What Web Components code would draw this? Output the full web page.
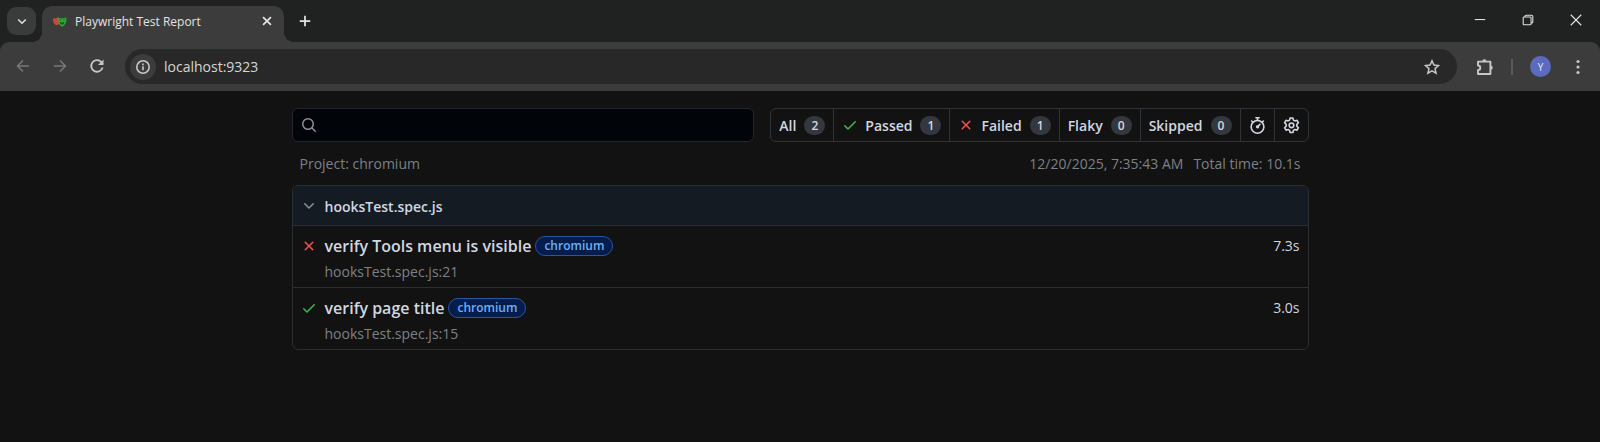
<!DOCTYPE html>
<html lang="en">
<head>
<meta charset="utf-8">
<title>Playwright Test Report</title>
<style>
  body {
    margin: 0;
    min-height: 100vh;
    background: #121212;
    color: #d1d7e0;
    font-family: "Open Sans", "Noto Sans", sans-serif;
    font-size: 14px;
  }
</style>
</head>
<body>
<browser-tabs><span slot="title">Playwright Test Report</span></browser-tabs>
<browser-toolbar url="localhost:9323"></browser-toolbar>
<test-report></test-report>

<script>
const ICONS = {
  down: '<path d="M3 6l5 5 5-5" fill="none" stroke="currentColor" stroke-width="2"/>',
  chevron: '<path fill="currentColor" d="M12.78 5.22a.75.75 0 0 1 0 1.06l-4.25 4.25a.75.75 0 0 1-1.06 0L3.22 6.28a.75.75 0 0 1 1.06-1.06L8 8.94l3.72-3.72a.75.75 0 0 1 1.06 0Z"/>',
  close: '<path d="M3.500 3.500l9 9m0-9l-9 9" fill="none" stroke="currentColor" stroke-width="2"/>',
  plus: '<path d="M8 2v12M2 8h12" fill="none" stroke="currentColor" stroke-width="2"/>',
  minimize: '<path d="M2 7.500h12" fill="none" stroke="currentColor" stroke-width="1.200"/>',
  restore: '<path d="M2.500 5.500a1 1 0 0 1 1-1h7a1 1 0 0 1 1 1v7a1 1 0 0 1-1 1h-7a1 1 0 0 1-1-1zM4.500 4.500v-.5a1.500 1.500 0 0 1 1.500-1.500h6a1.500 1.500 0 0 1 1.500 1.500v6a1.500 1.500 0 0 1-1.500 1.500h-.5" fill="none" stroke="currentColor" stroke-width="1.200"/>',
  exit: '<path d="M2 2l12 12m0-12l-12 12" fill="none" stroke="currentColor" stroke-width="1.300"/>',
  back: '<path d="M14 8H3M8 2.500L2.500 8 8 13.500" fill="none" stroke="currentColor" stroke-width="1.600"/>',
  forward: '<path d="M2 8h11M8 2.500L13.500 8 8 13.500" fill="none" stroke="currentColor" stroke-width="1.600"/>',
  reload: '<path d="M13.600 9.500A5.800 5.800 0 1 1 12.300 4l1.200 1.400" fill="none" stroke="currentColor" stroke-width="1.800"/><path d="M14.500 1.500v5.500H9z" fill="currentColor"/>',
  info: '<circle cx="8" cy="8" r="6.200" fill="none" stroke="currentColor" stroke-width="1.600"/><path d="M7.200 7.200h1.600v4H7.200zM7.200 4.600h1.600v1.600H7.200z" fill="currentColor"/>',
  star: '<path d="M8 1.800l1.900 4.300 4.600.4-3.500 3.100 1.100 4.600L8 11.800l-4.100 2.400L5 9.600 1.500 6.500l4.600-.4z" fill="none" stroke="currentColor" stroke-width="1.500"/>',
  puzzle: '<path d="M1.800 3.200h11v11h-11v-3.600a2 2 0 0 0 0-4z" fill="none" stroke="currentColor" stroke-width="1.700" stroke-linejoin="round"/><path d="M5.500 3a1.900 1.900 0 0 1 3.800 0zM13 6.800a1.900 1.900 0 0 1 0 3.800z" fill="currentColor"/>',
  dots: '<circle cx="8" cy="2.500" r="1.600" fill="currentColor"/><circle cx="8" cy="8" r="1.600" fill="currentColor"/><circle cx="8" cy="13.500" r="1.600" fill="currentColor"/>',
  masks: '<path d="M1 4.500q3 .8 6-1.500l1 7q-2 2.500-4 1.800Q1 10.500 1 4.500z" fill="#c9483b"/><path d="M6.500 4q4 1.600 8.800-.6Q16 11 11 13.500 6.500 12.500 6.500 4z" fill="#2ead33"/><path d="M8 6.500q1-.8 2 .2M12 6.500q1-1 2-.3M8.500 9q2.500 1.200 4.500-.4-.8 2.600-2.300 2.500T8.500 9z" fill="#14511a" stroke="#14511a" stroke-width=".6"/>',
  search: '<path fill="currentColor" d="M10.680 11.740a6 6 0 0 1-7.922-8.982 6 6 0 0 1 8.982 7.922l3.040 3.040a.749.749 0 1 1-1.060 1.060l-3.040-3.040ZM11.500 7a4.499 4.499 0 1 0-8.997 0A4.499 4.499 0 0 0 11.500 7Z"/>',
  check: '<path fill="currentColor" d="M13.780 4.220a.75.75 0 0 1 0 1.060l-7.250 7.250a.75.75 0 0 1-1.060 0L2.220 9.280a.751.751 0 0 1 1.060-1.060L6 10.940l6.720-6.720a.75.75 0 0 1 1.060 0Z"/>',
  cross: '<path fill="currentColor" d="M3.720 3.720a.75.75 0 0 1 1.060 0L8 6.940l3.220-3.220a.75.75 0 1 1 1.060 1.060L9.060 8l3.220 3.220a.75.75 0 1 1-1.060 1.060L8 9.060l-3.220 3.220a.75.75 0 0 1-1.060-1.060L6.940 8 3.720 4.780a.75.75 0 0 1 0-1.060Z"/>',
  stopwatch: '<path fill="currentColor" d="M5.750.75A.75.75 0 0 1 6.500 0h3a.75.75 0 0 1 0 1.500h-.75v1l-.001.041a6.724 6.724 0 0 1 3.464 1.435l.007-.006.75-.75a.749.749 0 1 1 1.060 1.060l-.75.75-.006.007a6.750 6.750 0 1 1-10.548 0L2.720 5.030l-.75-.75a.751.751 0 0 1 1.060-1.060l.75.75.007.006A6.720 6.720 0 0 1 7.250 2.541V1.500H6.500a.75.75 0 0 1-.75-.75ZM8 14.500a5.250 5.250 0 1 0 0-10.500 5.250 5.250 0 0 0 0 10.500Zm.389-6.700 1.330-1.330a.75.75 0 1 1 1.061 1.060L9.450 8.861A1.503 1.503 0 0 1 8 10.750a1.499 1.499 0 1 1 .389-2.950Z"/>',
  gear: '<path fill="none" stroke="currentColor" stroke-width="1.500" stroke-linejoin="round" d="M6.700.9h2.600l.5 2 1.400.8 2-.6 1.300 2.300-1.500 1.500v1.700l1.500 1.500-1.300 2.300-2-.6-1.400.8-.5 2H6.700l-.5-2-1.400-.8-2 .6-1.300-2.300L3 8.600V6.900L1.500 5.400l1.300-2.300 2 .6 1.400-.8z"/><circle cx="8" cy="7.800" r="2.200" fill="none" stroke="currentColor" stroke-width="1.500"/>'
};

class UiIcon extends HTMLElement {
  constructor() {
    super();
    this.attachShadow({ mode: 'open' });
  }

  connectedCallback() {
    this.shadowRoot.innerHTML = `
      <style>
        :host { display: inline-flex; flex: none; width: 16px; height: 16px; }
        svg { width: 100%; height: 100%; }
      </style>
      <svg viewBox="0 0 16 16" aria-hidden="true">${ICONS[this.getAttribute('name')]}</svg>
    `;
  }
}

class BrowserTabs extends HTMLElement {
  constructor() {
    super();
    this.attachShadow({ mode: 'open' });
  }

  connectedCallback() {
    this.shadowRoot.innerHTML = `
      <style>
        :host {
          display: flex;
          align-items: flex-start;
          height: 42px;
          background: #1f2221;
          color: #e3e3e3;
          font-size: 12px;
        }
        button {
          display: grid;
          place-items: center;
          padding: 0;
          border: 0;
          background: none;
          color: inherit;
        }
        ui-icon { width: 14px; height: 14px; }
        .list {
          width: 29px;
          height: 28px;
          margin: 7px 6px 0 7px;
          border-radius: 9px;
          background: #3a3c3b;
        }
        .list ui-icon { width: 12px; height: 12px; }
        .tab {
          position: relative;
          display: flex;
          align-items: center;
          gap: 8px;
          box-sizing: border-box;
          width: 242px;
          height: 36px;
          margin-top: 6px;
          padding: 0 10px;
          border-radius: 10px 10px 0 0;
          background: #3c3c3c;
        }
        /* flared feet of the active tab */
        .tab::before, .tab::after {
          content: "";
          position: absolute;
          bottom: 0;
          width: 10px;
          height: 10px;
        }
        .tab::before { right: 100%; background: radial-gradient(circle at 0 0, transparent 10px, #3c3c3c 10px); }
        .tab::after { left: 100%; background: radial-gradient(circle at 100% 0, transparent 10px, #3c3c3c 10px); }
        .name { flex: 1; padding-bottom: 6px; white-space: nowrap; }
        .tab > ui-icon, .tab button { margin-bottom: 6px; }
        .fav { width: 15px; height: 15px; }
        .new { width: 28px; height: 28px; margin: 7px 0 0 7px; }
        .window { display: flex; margin: 6px 0 0 auto; }
        .window button { width: 48px; height: 28px; }
      </style>
      <button class="list" aria-label="Search tabs"><ui-icon name="down"></ui-icon></button>
      <div class="tab">
        <ui-icon class="fav" name="masks"></ui-icon>
        <span class="name"><slot name="title"></slot></span>
        <button aria-label="Close tab"><ui-icon name="close"></ui-icon></button>
      </div>
      <button class="new" aria-label="New tab"><ui-icon name="plus"></ui-icon></button>
      <div class="window">
        <button aria-label="Minimize"><ui-icon name="minimize"></ui-icon></button>
        <button aria-label="Restore"><ui-icon name="restore"></ui-icon></button>
        <button aria-label="Close"><ui-icon name="exit"></ui-icon></button>
      </div>
    `;
  }
}

class BrowserToolbar extends HTMLElement {
  constructor() {
    super();
    this.attachShadow({ mode: 'open' });
  }

  connectedCallback() {
    this.shadowRoot.innerHTML = `
      <style>
        :host { display: block; background: #1f2221; color: #c7c7c7; }
        .bar {
          display: flex;
          align-items: center;
          height: 49px;
          padding: 0 9px 0 8px;
          border-radius: 9px 9px 0 0;
          background: #3c3c3c;
        }
        button {
          display: grid;
          place-items: center;
          flex: none;
          width: 30px;
          height: 30px;
          padding: 0;
          border: 0;
          background: none;
          color: inherit;
        }
        .nav { display: flex; gap: 7px; padding-bottom: 2px; }
        .nav button:disabled { color: #777; }
        .address {
          flex: 1;
          display: flex;
          align-items: center;
          gap: 8px;
          height: 35px;
          margin: 0 13px;
          padding: 0 10px 0 5px;
          border-radius: 18px;
          background: #282828;
        }
        .info { width: 26px; height: 26px; border-radius: 50%; background: #3c3c3c; }
        input {
          flex: 1;
          min-width: 0;
          padding: 0;
          border: 0;
          outline: 0;
          background: none;
          color: #d6d6d6;
          font: inherit;
        }
        .line { width: 2px; height: 16px; margin: 0 11px; background: #5a5a5a; }
        .avatar {
          width: 21px;
          height: 21px;
          margin: 0 14px 0 6px;
          border-radius: 50%;
          background: #5c6bc0;
          color: #e8eaf6;
          font: inherit;
          font-size: 10px;
        }
        .puzzle { width: 18px; height: 18px; }
        .more { width: 26px; }
      </style>
      <div class="bar">
        <div class="nav">
          <button disabled aria-label="Back"><ui-icon name="back"></ui-icon></button>
          <button disabled aria-label="Forward"><ui-icon name="forward"></ui-icon></button>
          <button aria-label="Reload"><ui-icon name="reload"></ui-icon></button>
        </div>
        <div class="address">
          <button class="info" aria-label="Site information"><ui-icon name="info"></ui-icon></button>
          <input type="text" aria-label="Address" value="${this.getAttribute('url')}">
          <button aria-label="Bookmark"><ui-icon name="star"></ui-icon></button>
        </div>
        <button aria-label="Extensions"><ui-icon class="puzzle" name="puzzle"></ui-icon></button>
        <span class="line"></span>
        <button class="avatar" aria-label="Profile">Y</button>
        <button class="more" aria-label="Menu"><ui-icon name="dots"></ui-icon></button>
      </div>
    `;
  }
}

class FilterLink extends HTMLElement {
  constructor() {
    super();
    this.attachShadow({ mode: 'open' });
  }

  connectedCallback() {
    const icon = this.getAttribute('icon');
    const count = this.getAttribute('count');
    this.shadowRoot.innerHTML = `
      <style>
        :host { display: block; border-left: 1px solid #2f3338; }
        :host(:first-child) { border-left: 0; }
        a {
          display: flex;
          align-items: center;
          height: 32px;
          padding: 0 8px;
          color: #d1d7e0;
          font-weight: 600;
          text-decoration: none;
          white-space: nowrap;
        }
        ui-icon { margin-right: 7px; color: var(--icon-color); }
        .count {
          min-width: 9px;
          margin-left: 8px;
          padding: 0 6px;
          border-radius: 10px;
          background: #34383e;
          font-size: 12px;
          line-height: 19px;
          text-align: center;
        }
      </style>
      <a href="#">
        ${icon ? `<ui-icon name="${icon}"></ui-icon>` : ''}
        <slot></slot>
        <span class="count">${count}</span>
      </a>
    `;
  }
}

class TestRow extends HTMLElement {
  constructor() {
    super();
    this.attachShadow({ mode: 'open' });
  }

  connectedCallback() {
    const passed = this.getAttribute('status') === 'passed';
    this.shadowRoot.innerHTML = `
      <style>
        :host { display: block; border-top: 1px solid #2b2f34; }
        .row {
          display: grid;
          grid-template-columns: 16px 1fr auto;
          column-gap: 8px;
          align-items: center;
          padding: 8px 8px 1px;
          line-height: 24px;
        }
        ui-icon { color: ${passed ? '#3fb950' : '#f85149'}; }
        a { color: inherit; text-decoration: none; }
        .name {
          display: flex;
          align-items: center;
          gap: 4px;
        }
        .title { font-size: 16px; font-weight: 600; }
        .label {
          padding: 0 8px;
          border: 1px solid #2c55a0;
          border-radius: 10px;
          background: #051d4d;
          color: #6cb0f5;
          font-size: 12px;
          font-weight: 600;
          line-height: 18px;
        }
        .path { grid-column: 2; color: #7d8186; line-height: 28px; }
      </style>
      <div class="row">
        <ui-icon name="${passed ? 'check' : 'cross'}"></ui-icon>
        <div class="name">
          <a class="title" href="#"><slot></slot></a>
          <a class="label" href="#">chromium</a>
        </div>
        <span>${this.getAttribute('duration')}</span>
        <a class="path" href="#">${this.getAttribute('path')}</a>
      </div>
    `;
  }
}

class TestReport extends HTMLElement {
  constructor() {
    super();
    this.attachShadow({ mode: 'open' });
  }

  connectedCallback() {
    this.shadowRoot.innerHTML = `
      <style>
        :host { display: block; max-width: 1017px; margin: 0 auto; padding: 17px 16px 0; }
        .top { display: flex; gap: 16px; }
        .search {
          flex: 1;
          display: flex;
          align-items: center;
          padding: 0 8px;
          border: 1px solid #23272c;
          border-radius: 6px;
          background: #010409;
          color: #8b9098;
        }
        input {
          flex: 1;
          min-width: 0;
          padding: 0 8px;
          border: 0;
          outline: 0;
          background: none;
          color: #d1d7e0;
          font: inherit;
        }
        nav { display: flex; border: 1px solid #2f3338; border-radius: 6px; }
        .passed { --icon-color: #3fb950; }
        .failed { --icon-color: #f85149; }
        .tool {
          width: 34px;
          padding: 0;
          border: 0;
          border-left: 1px solid #2f3338;
          background: none;
          color: #d1d7e0;
          display: grid;
          place-items: center;
        }
        .tool ui-icon { width: 17px; height: 17px; }
        .meta {
          display: flex;
          gap: 10px;
          padding: 11px 8px;
          color: #7d8186;
          line-height: 21px;
        }
        .project { flex: 1; }
        .file { border: 1px solid #2b2f34; border-radius: 6px; overflow: hidden; }
        .head {
          display: flex;
          align-items: center;
          gap: 8px;
          width: 100%;
          height: 39px;
          padding: 1px 8px 0;
          border: 0;
          background: #151b23;
          color: #d1d7e0;
          font: inherit;
          font-weight: 600;
        }
        .head ui-icon { color: #8b9098; }
      </style>
      <div class="top">
        <div class="search">
          <ui-icon name="search"></ui-icon>
          <input type="text" aria-label="Search tests" spellcheck="false">
        </div>
        <nav>
          <filter-link count="2">All</filter-link>
          <filter-link class="passed" icon="check" count="1">Passed</filter-link>
          <filter-link class="failed" icon="cross" count="1">Failed</filter-link>
          <filter-link count="0">Flaky</filter-link>
          <filter-link count="0">Skipped</filter-link>
          <button class="tool" aria-label="Speedboard"><ui-icon name="stopwatch"></ui-icon></button>
          <button class="tool" aria-label="Settings"><ui-icon name="gear"></ui-icon></button>
        </nav>
      </div>
      <div class="meta">
        <span class="project">Project: chromium</span>
        <span>12/20/2025, 7:35:43 AM</span>
        <span>Total time: 10.1s</span>
      </div>
      <div class="file">
        <button class="head"><ui-icon name="chevron"></ui-icon>hooksTest.spec.js</button>
        <test-row status="failed" duration="7.3s" path="hooksTest.spec.js:21">verify Tools menu is visible</test-row>
        <test-row status="passed" duration="3.0s" path="hooksTest.spec.js:15">verify page title</test-row>
      </div>
    `;
  }
}

customElements.define('ui-icon', UiIcon);
customElements.define('browser-tabs', BrowserTabs);
customElements.define('browser-toolbar', BrowserToolbar);
customElements.define('filter-link', FilterLink);
customElements.define('test-row', TestRow);
customElements.define('test-report', TestReport);
</script>
</body>
</html>
